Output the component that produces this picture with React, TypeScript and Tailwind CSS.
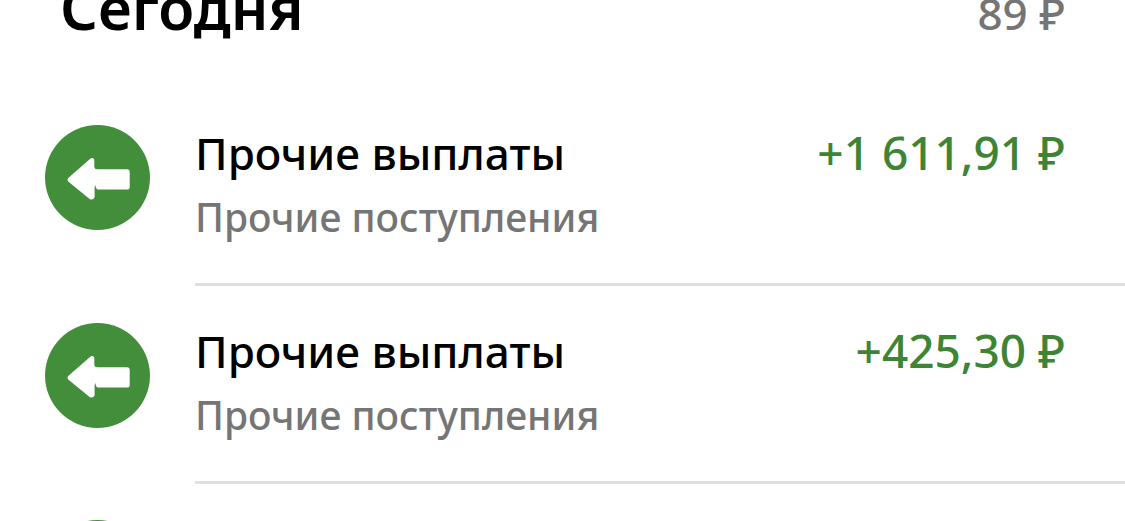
type Operation = {
  title: string;
  category: string;
  amount: string;
};

const operations: Operation[] = [
  { title: "Прочие выплаты", category: "Прочие поступления", amount: "+1 611,91 ₽" },
  { title: "Прочие выплаты", category: "Прочие поступления", amount: "+425,30 ₽" },
];

function IncomingIcon() {
  return (
    <svg viewBox="0 0 105 105" className="size-[105px] shrink-0" aria-hidden="true">
      <circle cx="52.5" cy="52.5" r="52.5" fill="#438e3a" />
      <path
        d="M23.5 52.8 L45 34 Q47.5 32 49.3 34.4 V42 Q49.6 44.2 52 44.2 H82 Q84.7 44.2 84.7 47 V62 Q84.7 64.6 82 64.6 H53 Q50.8 64.4 50.4 60 L49.6 62 V72 Q48.5 75.8 44.6 74 L23.5 56.8 Q21.5 54.8 23.5 52.8 Z"
        fill="#fff"
      />
    </svg>
  );
}

function OperationRow({ title, category, amount }: Operation) {
  return (
    <li className="flex h-[198px] gap-[45px] pl-[45px]">
      <div className="pt-[37px]">
        <IncomingIcon />
      </div>
      <div className="min-w-0 flex-1 border-b-3 border-[#dfdfdf] pt-[34px] pr-[60px]">
        <div className="flex items-baseline justify-between leading-[60px] font-medium">
          <h2 className="text-[44px] text-black">{title}</h2>
          <p className="text-[46px] whitespace-nowrap text-[#3d8534]">{amount}</p>
        </div>
        <p className="mt-1 text-[39px] leading-[60px] font-medium text-[#757575]">{category}</p>
      </div>
    </li>
  );
}

export default function App() {
  return (
    <main className="h-screen overflow-hidden bg-white font-['Noto_Sans','Open_Sans',sans-serif]">
      <header className="flex h-[88px] items-baseline justify-between px-[60px]">
        <h1 className="text-[59px] leading-[14px] font-semibold text-black">Сегодня</h1>
        <p className="text-[44px] leading-[14px] font-medium text-[#757575]">89 ₽</p>
      </header>
      <ul>
        {operations.map((operation) => (
          <OperationRow key={operation.amount} {...operation} />
        ))}
        <li className="flex pt-9 pl-[45px]">
          <IncomingIcon />
        </li>
      </ul>
    </main>
  );
}
